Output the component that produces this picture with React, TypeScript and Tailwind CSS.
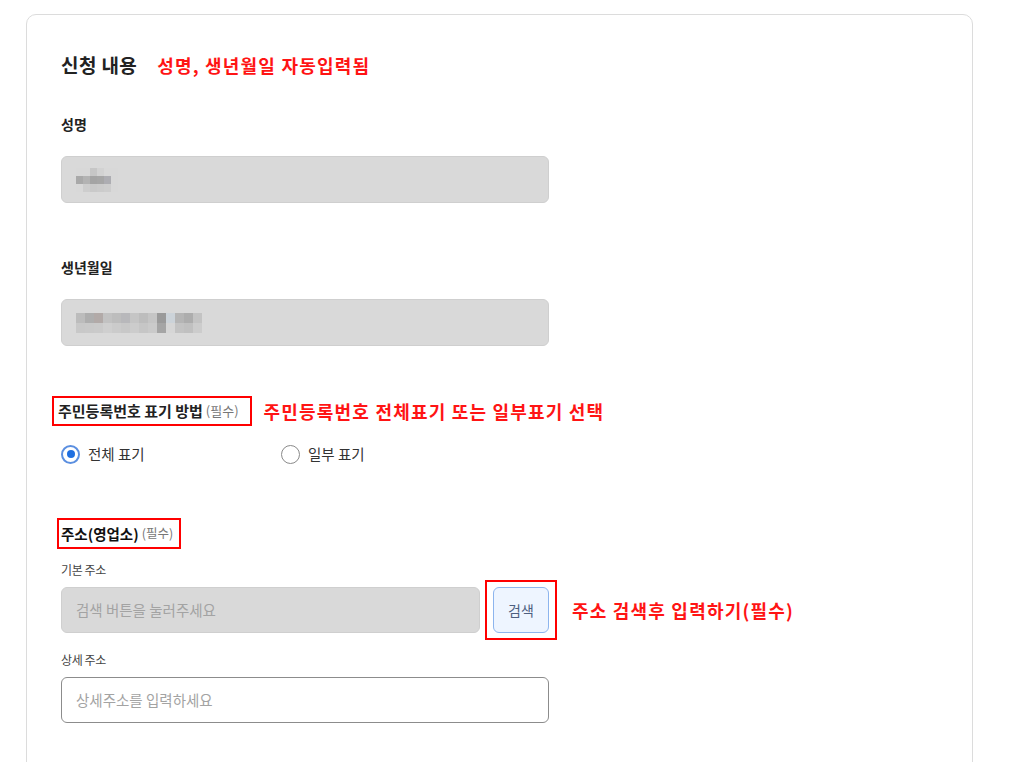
const font = { fontFamily: '"Noto Sans CJK KR", "Noto Sans", sans-serif' };

// blurred (mosaic) values, drawn as pixel blocks
const NAME_MOSAIC = [
  ["#d8d8d8", "#d8d8d8", "#c6c6c6", "#d2d2d2", "#d8d8d8", "#d8d8d8"],
  ["#a9a9a9", "#b3b3b3", "#a4a4a4", "#a6a6a6", "#adadb2", "#d8d8d8"],
  ["#d8d8d8", "#cdcdcd", "#c9c9c9", "#cbcbcb", "#cdcdcd", "#d8d8d8"],
];
const BIRTH_MOSAIC = [
  ["#bcbcbc", "#aeaeae", "#b2aaa8", "#c2c2c2", "#bdbdbd", "#b8b8bb", "#c5c5c5", "#bdbdbd", "#c5c5c5", "#9a9a9a", "#ccd3d9", "#b5b5b5", "#adadad", "#c3c3c3"],
  ["#c8c8c8", "#c9c9c9", "#cacaca", "#cfcfcf", "#cbcbcb", "#c8c8c8", "#cccccc", "#c6c6c6", "#cacaca", "#a5a5a5", "#d6d6d6", "#c3c3c3", "#c0c0c0", "#cccccc"],
];

function Mosaic({ rows, cell, rowH }: { rows: string[][]; cell: number; rowH: number }) {
  return (
    <div className="flex flex-col">
      {rows.map((r, i) => (
        <div key={i} className="flex">
          {r.map((c, j) => (
            <div key={j} style={{ background: c, width: cell, height: rowH }} />
          ))}
        </div>
      ))}
    </div>
  );
}

function Label({ children }: { children: React.ReactNode }) {
  return <div className="text-[14px] leading-[20px] font-bold text-[#222]">{children}</div>;
}

function Note({ children }: { children: React.ReactNode }) {
  return <span className="text-[18px] leading-[24px] font-bold text-[#ff1414] tracking-[1.2px]">{children}</span>;
}

export default function App() {
  return (
    <div className="min-h-[762px] bg-white overflow-hidden" style={font}>
      <div className="ml-[26px] mt-[14px] w-[947px] h-[800px] rounded-[10px] border border-[#dcdcdc] pl-[34px] pt-[36px]">
        {/* title */}
        <div className="flex items-center h-[28px]">
          <h2 className="text-[19px] leading-[28px] font-bold text-[#222] tracking-[0.4px]">신청 내용</h2>
          <span className="ml-[20px]">
            <Note>성명, 생년월일 자동입력됨</Note>
          </span>
        </div>

        {/* name */}
        <div className="mt-[35px]">
          <Label>성명</Label>
        </div>
        <div className="mt-[22px] w-[488px] h-[47px] rounded-[6px] border border-[#cfcfcf] bg-[#d9d9d9] flex items-center pl-[14px]">
          <Mosaic rows={NAME_MOSAIC} cell={7} rowH={8} />
        </div>

        {/* birth */}
        <div className="mt-[54px]">
          <Label>생년월일</Label>
        </div>
        <div className="mt-[22px] w-[488px] h-[47px] rounded-[6px] border border-[#cfcfcf] bg-[#d9d9d9] flex items-center pl-[14px]">
          <Mosaic rows={BIRTH_MOSAIC} cell={9} rowH={10} />
        </div>

        {/* id number display */}
        <div className="mt-[50px] flex items-center">
          <div className="-ml-[9px] h-[30px] border-2 border-[#ff0000] pl-[4px] pr-[11px] flex items-center">
            <span className="text-[15px] font-bold text-[#222]">주민등록번호 표기 방법</span>
            <span className="ml-[3px] text-[13px] text-[#777]">(필수)</span>
          </div>
          <span className="ml-[12px]">
            <Note>주민등록번호 전체표기 또는 일부표기 선택</Note>
          </span>
        </div>

        <div className="mt-[18px] flex items-center h-[20px]">
          <label className="flex items-center w-[220px]">
            <span className="w-[19px] h-[19px] rounded-full border-2 border-[#5b8fe0] flex items-center justify-center">
              <span className="w-[8px] h-[8px] rounded-full bg-[#1f6fe0]" />
            </span>
            <span className="ml-[8px] text-[14.5px] text-[#333]">전체 표기</span>
          </label>
          <label className="flex items-center">
            <span className="w-[19px] h-[19px] rounded-full border border-[#8a8a8a]" />
            <span className="ml-[8px] text-[14.5px] text-[#333]">일부 표기</span>
          </label>
        </div>

        {/* address */}
        <div className="mt-[54px] flex">
          <div className="-ml-[4px] h-[31px] border-2 border-[#ff0000] pl-[2px] pr-[6px] flex items-center">
            <span className="text-[14.5px] font-bold text-[#111]">주소(영업소)</span>
            <span className="ml-[3px] text-[12.5px] text-[#777]">(필수)</span>
          </div>
        </div>

        <div className="mt-[13px] text-[12px] leading-[16px] text-[#444] tracking-[-0.4px]">기본 주소</div>
        <div className="mt-[9px] flex items-center">
          <div className="w-[419px] h-[46px] rounded-[6px] border border-[#cfcfcf] bg-[#d9d9d9] flex items-center pl-[14px] text-[14.5px] text-[#a3a3a3]">
            검색 버튼을 눌러주세요
          </div>
          <div className="ml-[5px] -my-[7px] border-2 border-[#ff0000] px-[6px] py-[5px]">
            <button className="w-[56px] h-[46px] rounded-[6px] border border-[#8db5ee] bg-[#eef5ff] text-[14px] text-[#4d5f80]">
              검색
            </button>
          </div>
          <span className="ml-[15px]">
            <Note>주소 검색후 입력하기(필수)</Note>
          </span>
        </div>

        <div className="mt-[19px] text-[12px] leading-[16px] text-[#444] tracking-[-0.4px]">상세 주소</div>
        <div className="mt-[9px] w-[488px] h-[46px] rounded-[6px] border border-[#8c8c8c] bg-white flex items-center pl-[14px] text-[14.5px] text-[#a3a3a3]">
          상세주소를 입력하세요
        </div>
      </div>
    </div>
  );
}
